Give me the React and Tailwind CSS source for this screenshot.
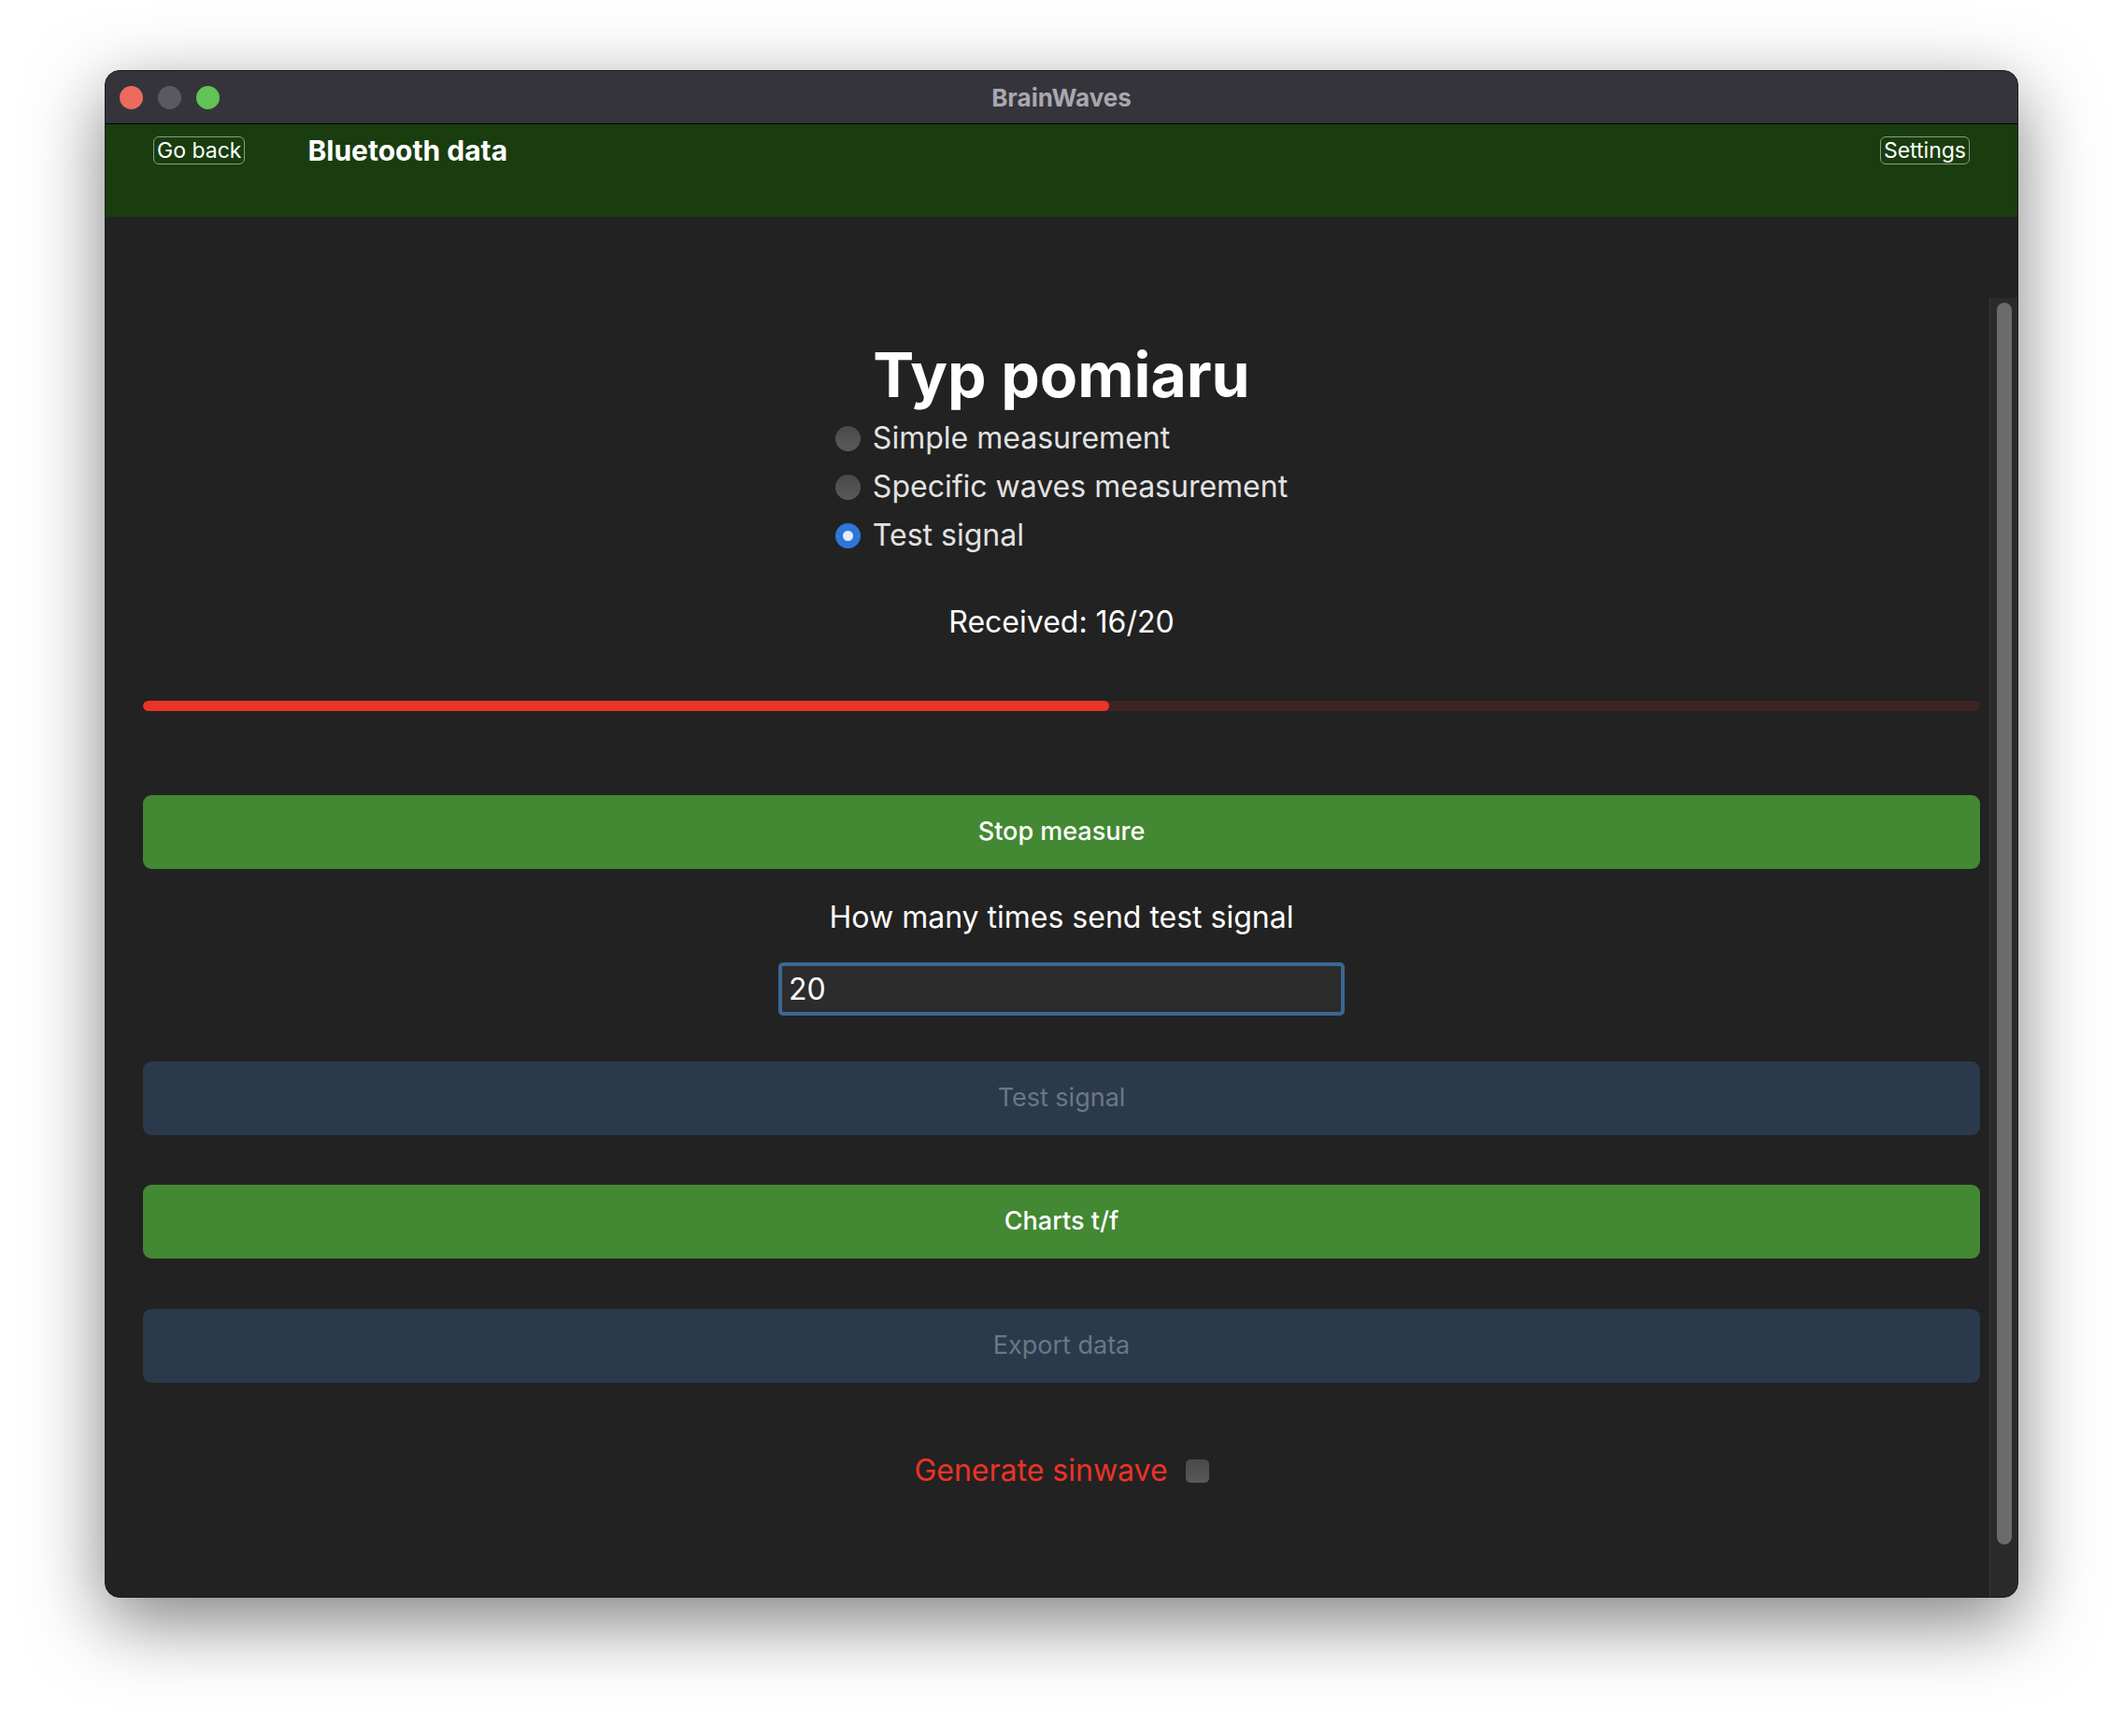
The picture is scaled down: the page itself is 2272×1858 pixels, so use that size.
import { useState } from 'react';

const font = { fontFamily: 'Inter, "Noto Sans", sans-serif' };

function HeaderButton({ children }) {
  return (
    <button className="h-[30px] px-[3px] rounded-[6px] border border-[#8e9a8a] text-[23px] leading-[26px] text-white">
      {children}
    </button>
  );
}

function Radio({ label, checked }) {
  return (
    <div className="h-[52px] flex items-center gap-[13px]">
      {checked ? (
        <span className="w-[27px] h-[27px] rounded-full bg-[#2f76d8] flex items-center justify-center">
          <span className="w-[11px] h-[11px] rounded-full bg-[#e4ecf8]" />
        </span>
      ) : (
        <span className="w-[27px] h-[27px] rounded-full bg-gradient-to-b from-[#4a4a4a] to-[#5a5a5a]" />
      )}
      <span className="text-[32px] text-[#e2e2e2]">{label}</span>
    </div>
  );
}

function ActionButton({ children, disabled, className }) {
  return (
    <button
      disabled={disabled}
      className={`w-full h-[79px] rounded-[9px] text-[27px] ${
        disabled ? 'bg-[#2a3a4c] text-[#6b7786]' : 'bg-[#438833] text-white font-medium'
      } ${className}`}
    >
      {children}
    </button>
  );
}

export default function App() {
  const [mode, setMode] = useState('test');
  const [count, setCount] = useState('20');
  const received = 16;
  const total = 20;

  return (
    <div className="w-[2272px] h-[1858px] bg-white pt-[75px] pl-[112px]" style={font}>
      <div className="w-[2048px] h-[1635px] rounded-[16px] border border-[#1a1a1a] overflow-hidden flex flex-col bg-[#222222] shadow-[0_25px_80px_rgba(0,0,0,0.5)]">
        {/* title bar */}
        <div className="relative h-[57px] shrink-0 bg-[#36343b] border-b border-black flex items-center">
          <div className="flex gap-[16px] pl-[15px]">
            <span className="w-[25px] h-[25px] rounded-full bg-[#ec6a5e]" />
            <span className="w-[25px] h-[25px] rounded-full bg-[#5b5960]" />
            <span className="w-[25px] h-[25px] rounded-full bg-[#61c454]" />
          </div>
          <div className="absolute inset-0 flex items-center justify-center text-[26px] font-bold text-[#a9a7af]">
            BrainWaves
          </div>
        </div>

        {/* green header */}
        <div className="h-[99px] shrink-0 bg-[#193d0f] flex items-start justify-between pt-[13px] px-[51px]">
          <div className="flex items-center gap-[67px] h-[30px]">
            <HeaderButton>Go back</HeaderButton>
            <span className="text-[30px] leading-[30px] font-bold text-white">Bluetooth data</span>
          </div>
          <HeaderButton>Settings</HeaderButton>
        </div>

        {/* content */}
        <div className="flex-1 flex min-h-0">
          <div className="flex-1 flex flex-col items-center pt-[127px] pl-[40px] pr-[10px]">
            <h1 className="text-[66px] leading-[84px] font-bold text-white">Typ pomiaru</h1>
            <div className="flex flex-col items-start">
              <div onClick={() => setMode('simple')}>
                <Radio label="Simple measurement" checked={mode === 'simple'} />
              </div>
              <div onClick={() => setMode('waves')}>
                <Radio label="Specific waves measurement" checked={mode === 'waves'} />
              </div>
              <div onClick={() => setMode('test')}>
                <Radio label="Test signal" checked={mode === 'test'} />
              </div>
            </div>

            <div className="mt-[47px] text-[32px] leading-[40px] text-white">
              Received: {received}/{total}
            </div>

            <div className="mt-[64px] w-full h-[11px] rounded-full bg-[#3d2423] overflow-hidden">
              <div className="h-full rounded-full bg-[#ec3327]" style={{ width: '52.6%' }} />
            </div>

            <ActionButton className="mt-[90px]">Stop measure</ActionButton>

            <div className="mt-[32px] text-[32px] leading-[40px] text-white">How many times send test signal</div>

            <input
              value={count}
              onChange={(e) => setCount(e.target.value)}
              className="mt-[28px] w-[606px] h-[57px] rounded-[5px] border-[4px] border-[#3b6792] bg-[#2c2c2c] pl-[7px] text-[32px] text-white outline-none"
            />

            <ActionButton disabled className="mt-[49px]">Test signal</ActionButton>
            <ActionButton className="mt-[53px]">Charts t/f</ActionButton>
            <ActionButton disabled className="mt-[54px]">Export data</ActionButton>

            <div className="mt-[74px] h-[40px] flex items-center gap-[19px]">
              <span className="text-[32px] text-[#ec3327]">Generate sinwave</span>
              <span className="w-[25px] h-[25px] rounded-[5px] bg-gradient-to-b from-[#4a4a4a] to-[#595959]" />
            </div>
          </div>

          {/* scrollbar */}
          <div className="w-[30px] mt-[87px] bg-[#2a2a2a] border-l border-[#3a3a3a] pt-[5px] pl-[7px]">
            <div className="w-[16px] h-[1329px] rounded-full bg-[#6b6b6b]" />
          </div>
        </div>
      </div>
    </div>
  );
}
